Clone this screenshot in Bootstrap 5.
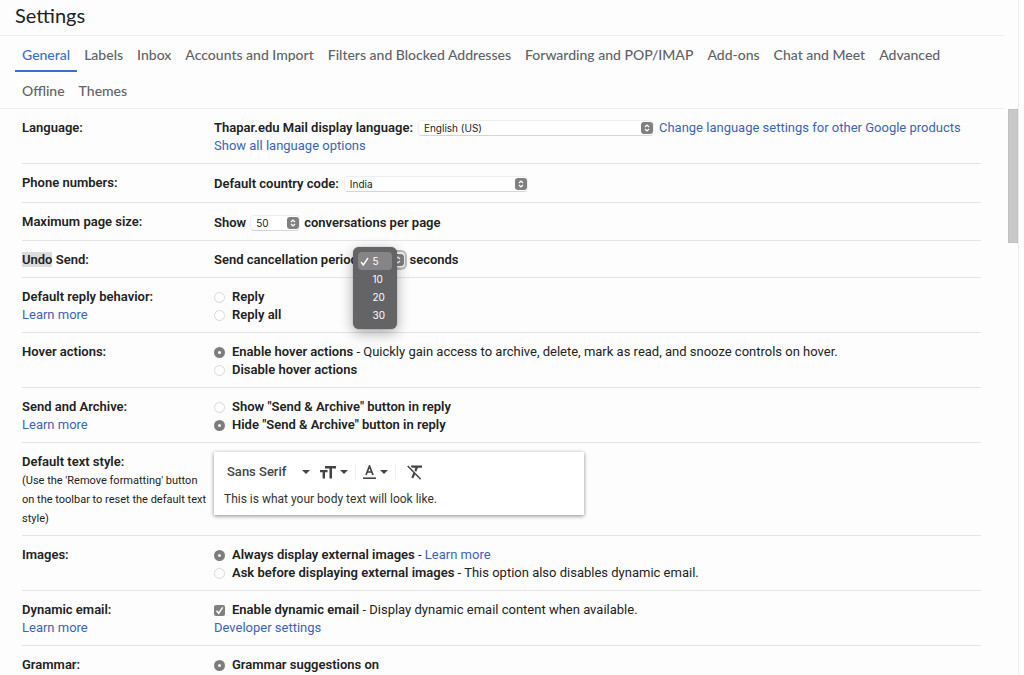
<!DOCTYPE html>
<html lang="en">
<head>
<meta charset="utf-8">
<meta name="viewport" content="width=device-width, initial-scale=1">
<title>Settings</title>
<link href="https://cdn.jsdelivr.net/npm/bootstrap@5.3.0/dist/css/bootstrap.min.css" rel="stylesheet">
<style>
  body { font: 13px/18px Roboto, "Liberation Sans", sans-serif; color: #222; background: #fdfdfd; }
  a { color: #3c63b8; text-decoration: none; }
  b, .fw-bold { font-weight: 600 !important; }
  .pane { border-right: 1px solid #ececec; margin-right: 5px; }
  .content { min-width: 0; margin-right: 5px; }
  .page-title { font: 20px/30px Lato, sans-serif; padding: 0 15px 5px; border-bottom: 1px solid #ececec; margin: 0; }
  .tabs { padding: 0 22px 0 15px; border-bottom: 1px solid #ececec; font: 500 14px/18px Lato, sans-serif; }
  .tabs .nav-link { color: #5f6368; padding: 10px 7px 6px; border-bottom: 2px solid transparent; }
  .tabs .nav-link.active { color: #3a70cf; border-color: #3a70cf; }
  .options { padding: 0 22px; }
  .option { padding: 10px 0 8px; border-bottom: 1px solid #e4e4e4; }
  .option-name { width: 192px; flex: none; }
  .hint { font-size: 11px; line-height: 19px; margin-bottom: -1px; }
  .found { background: #dcdcdc; }
  .line { display: flex; align-items: center; white-space: nowrap; }
  .line-tall { height: 20px; }
  .line-medium { height: 19px; }
  .picker { appearance: none; border: 1px solid #eee; border-bottom-color: #d5d5d5; border-radius: 4px; height: 16px; padding: 0 16px 0 5px; margin: 0 5px; color: #222;
    font: 10px/14px Inter, sans-serif;
    background: #fff url("data:image/svg+xml,%3Csvg xmlns='http://www.w3.org/2000/svg' width='12' height='12'%3E%3Crect width='12' height='12' rx='3' fill='%23808080'/%3E%3Cpath d='M4 5l2-2 2 2M4 7l2 2 2-2' fill='none' stroke='%23fff' stroke-width='1.2'/%3E%3C/svg%3E") no-repeat right center; }
  .picker-language { width: 236px; }
  .picker-country { width: 184px; }
  .picker-size { width: 50px; margin: 0 4px; }
  .picker-undo { width: 40px; margin: 0; box-shadow: 0 0 0 2px #bbb; }
  .undo-wrap { position: relative; display: flex; margin: 0 4px; }
  .menu { position: absolute; right: 8px; top: -5px; width: 44px; padding: 5px; border-radius: 6px; background: #646466; box-shadow: 0 4px 14px #0005, 0 0 1px #0008; z-index: 2; font: 500 10px/18px Inter, sans-serif; }
  .menu button { display: flex; align-items: center; width: 100%; height: 18px; padding: 0 0 0 14px; border: 0; border-radius: 4px; background: none; color: #fff; }
  .menu button.chosen { background: #858587; padding-left: 2px; gap: 3px; }
  .choice { display: flex; align-items: center; white-space: nowrap; }
  .choice input { appearance: none; flex: none; width: 11px; height: 11px; margin: 1px 7px 0 0; border: 1px solid #d8d8d8; background: #fff; }
  .choice input[type=radio] { border-radius: 50%; }
  .choice input[type=radio]:checked { border: 4px solid #7d7d7d; }
  .choice input[type=checkbox] { border: 0; border-radius: 2px; background: #808080 url("data:image/svg+xml,%3Csvg xmlns='http://www.w3.org/2000/svg' width='11' height='11'%3E%3Cpath d='M2.5 5.7l2.2 2.5 4-5.8' fill='none' stroke='%23fff' stroke-width='1.5'/%3E%3C/svg%3E"); }
  .editor { width: 370px; height: 63px; padding: 10px; background: #fff; box-shadow: 0 1px 4px #0007; color: #333; margin-top: -1px; font-size: 12px; }
  .tools { height: 20px; margin-bottom: 8px; }
  .tools button { display: flex; align-items: center; border: 0; background: none; padding: 0 3px; color: #444; font-size: 13px; font-weight: 500; }
  .split { width: 1px; height: 16px; background: #eee; }
  .thumb { width: 10px; height: 134px; margin-top: 109px; background: #c9c9c9; border: 1px solid #c0c0c0; }
</style>
</head>
<body>
<div class="pane d-flex vh-100 overflow-hidden">
  <main class="content flex-grow-1">
    <h1 class="page-title">Settings</h1>
    <nav class="nav tabs">
      <a class="nav-link active" href="#">General</a>
      <a class="nav-link" href="#">Labels</a>
      <a class="nav-link" href="#">Inbox</a>
      <a class="nav-link" href="#">Accounts and Import</a>
      <a class="nav-link" href="#">Filters and Blocked Addresses</a>
      <a class="nav-link" href="#">Forwarding and POP/IMAP</a>
      <a class="nav-link" href="#">Add-ons</a>
      <a class="nav-link" href="#">Chat and Meet</a>
      <a class="nav-link" href="#">Advanced</a>
      <a class="nav-link" href="#">Offline</a>
      <a class="nav-link" href="#">Themes</a>
    </nav>
    <form class="options">
      <section class="option d-flex">
        <div class="option-name fw-bold">Language:</div>
        <div>
          <div class="line"><label class="fw-bold" for="lang">Thapar.edu Mail display language:</label><select id="lang" class="picker picker-language"><option>English (US)</option></select><a href="#">Change language settings for other Google products</a></div>
          <a href="#">Show all language options</a>
        </div>
      </section>
      <section class="option d-flex">
        <div class="option-name fw-bold">Phone numbers:</div>
        <div class="line line-tall"><label class="fw-bold" for="country">Default country code:</label><select id="country" class="picker picker-country"><option>India</option></select></div>
      </section>
      <section class="option d-flex">
        <div class="option-name fw-bold">Maximum page size:</div>
        <div class="line line-medium fw-bold"><label for="size">Show</label><select id="size" class="picker picker-size"><option>50</option></select>conversations per page</div>
      </section>
      <section class="option d-flex">
        <div class="option-name fw-bold"><span class="found">Undo</span> Send:</div>
        <div class="line fw-bold"><label for="undo">Send cancellation period:</label>
          <div class="undo-wrap">
            <select id="undo" class="picker picker-undo"><option>5</option></select>
            <div class="menu">
              <button type="button" class="chosen"><svg width="9" height="9" viewBox="0 0 9 9" fill="none" stroke="#fff" stroke-width="1.4"><path d="M1 5l2.3 3L8 1"/></svg>5</button>
              <button type="button">10</button>
              <button type="button">20</button>
              <button type="button">30</button>
            </div>
          </div>seconds</div>
      </section>
      <section class="option d-flex">
        <div class="option-name"><b>Default reply behavior:</b><br><a href="#">Learn more</a></div>
        <div>
          <label class="choice"><input type="radio" name="reply"><b>Reply</b></label>
          <label class="choice"><input type="radio" name="reply"><b>Reply all</b></label>
        </div>
      </section>
      <section class="option d-flex">
        <div class="option-name fw-bold">Hover actions:</div>
        <div>
          <label class="choice"><input type="radio" name="hover" checked><span><b>Enable hover actions</b> - Quickly gain access to archive, delete, mark as read, and snooze controls on hover.</span></label>
          <label class="choice"><input type="radio" name="hover"><b>Disable hover actions</b></label>
        </div>
      </section>
      <section class="option d-flex">
        <div class="option-name"><b>Send and Archive:</b><br><a href="#">Learn more</a></div>
        <div>
          <label class="choice"><input type="radio" name="archive"><b>Show "Send &amp; Archive" button in reply</b></label>
          <label class="choice"><input type="radio" name="archive" checked><b>Hide "Send &amp; Archive" button in reply</b></label>
        </div>
      </section>
      <section class="option d-flex">
        <div class="option-name"><b>Default text style:</b><div class="hint text-nowrap">(Use the 'Remove formatting' button<br>on the toolbar to reset the default text<br>style)</div></div>
        <div class="editor">
          <div class="tools d-flex align-items-center">
            <button type="button">Sans Serif<svg class="ms-3" width="8" height="4"><path d="M0 0h8L4 4z" fill="#444"/></svg></button>
            <button type="button" class="ms-1" aria-label="Size"><svg width="16" height="13" viewBox="0 0 16 13" fill="#444"><path d="M5 0h11v2.500h-4V12.500h-2.500V2.500H5zM0 4h7.500v2.200H5V12.500H2.600V6.200H0z"/></svg><svg class="ms-1" width="8" height="4"><path d="M0 0h8L4 4z" fill="#444"/></svg></button>
            <span class="split ms-1"></span>
            <button type="button" class="ms-1" aria-label="Text colour"><svg width="13" height="14" viewBox="0 0 13 14" fill="none" stroke="#444"><path d="M3 10L6.500 1 10 10M4.200 7h4.600" stroke-width="1.700"/><path d="M0 13.200h13" stroke-width="1.600"/></svg><svg class="ms-1" width="8" height="4"><path d="M0 0h8L4 4z" fill="#444"/></svg></button>
            <span class="split ms-1"></span>
            <button type="button" class="ms-2" aria-label="Remove formatting"><svg width="16" height="15" viewBox="0 0 16 15" fill="none" stroke="#444"><path d="M4 1.700h11M10 2L5.300 13" stroke-width="2.200"/><path d="M1.500.5l13 13.500" stroke="#fff" stroke-width="2"/><path d="M.7 1l13 13.300" stroke-width="1.500"/></svg></button>
          </div>
          This is what your body text will look like.
        </div>
      </section>
      <section class="option d-flex">
        <div class="option-name fw-bold">Images:</div>
        <div>
          <label class="choice"><input type="radio" name="images" checked><span><b>Always display external images</b> - <a href="#">Learn more</a></span></label>
          <label class="choice"><input type="radio" name="images"><span><b>Ask before displaying external images</b> - This option also disables dynamic email.</span></label>
        </div>
      </section>
      <section class="option d-flex">
        <div class="option-name"><b>Dynamic email:</b><br><a href="#">Learn more</a></div>
        <div>
          <label class="choice"><input type="checkbox" checked><span><b>Enable dynamic email</b> - Display dynamic email content when available.</span></label>
          <a href="#">Developer settings</a>
        </div>
      </section>
      <section class="option d-flex">
        <div class="option-name fw-bold">Grammar:</div>
        <div><label class="choice"><input type="radio" name="grammar" checked><b>Grammar suggestions on</b></label></div>
      </section>
    </form>
  </main>
  <div class="thumb flex-shrink-0"></div>
</div>
<script src="https://cdn.jsdelivr.net/npm/bootstrap@5.3.0/dist/js/bootstrap.bundle.min.js"></script>
</body>
</html>
